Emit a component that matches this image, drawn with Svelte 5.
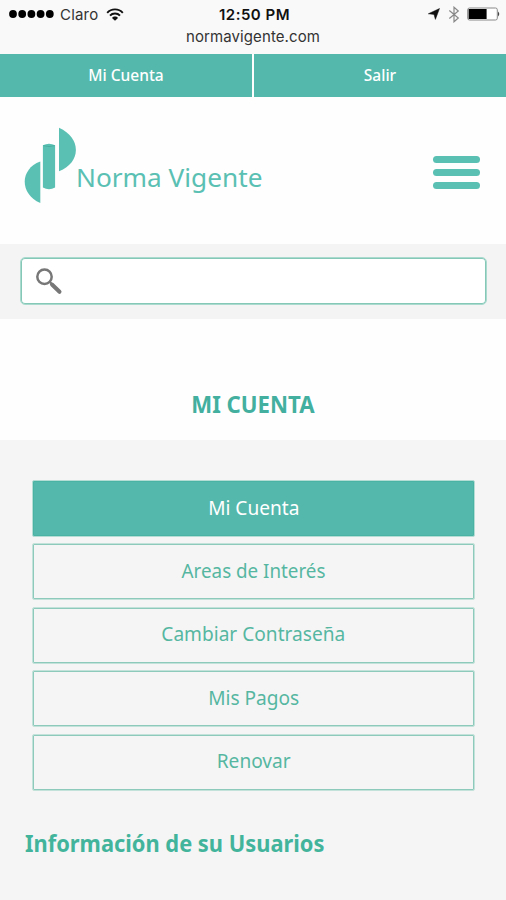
<script>
  const links = ['Mi Cuenta', 'Salir'];
  const options = [
    { label: 'Mi Cuenta', cls: 'account' },
    { label: 'Areas de Interés', cls: 'areas' },
    { label: 'Cambiar Contraseña', cls: 'password' },
    { label: 'Mis Pagos', cls: 'payments' },
    { label: 'Renovar', cls: 'renew' },
  ];
  let active = $state(0);
</script>

<div class="page">
  <div class="status">
    <div class="row">
      <div class="left">
        <svg width="46" height="8" viewBox="0 0 46 8">
          {#each [4, 13.2, 22.4, 31.6, 40.8] as cx}
            <circle {cx} cy="4" r="3.9" />
          {/each}
        </svg>
        <span class="carrier">Claro</span>
        <svg class="wifi" width="18" height="13" viewBox="0 0 18 13" fill="none" stroke="#111" stroke-width="1.9">
          <path d="M1.2 4.8C5.3.2 12.7.2 16.8 4.8" />
          <path d="M4 7.6C6.6 4.7 11.4 4.7 14 7.6" />
          <path d="M6 9.9C7.5 8.1 10.5 8.1 12 9.9L9 12.8Z" fill="#111" stroke="none" />
        </svg>
      </div>
      <span class="time">12:50 PM</span>
      <div class="right">
        <svg width="12" height="12" viewBox="0 0 12 12"><path d="M11.5.5L7.4 11.4 6 6.4.3 5.8Z" fill="#111" stroke="#111" stroke-width=".5" /></svg>
        <svg class="bt" width="12" height="17" viewBox="0 0 12 17" fill="none" stroke="#888" stroke-width="1.2"><path d="M1.3 4.5L10.3 12 6 15.8V1.2L10.3 5 1.3 12.5" /></svg>
        <svg class="battery" width="33" height="14" viewBox="0 0 33 14">
          <rect x=".7" y="1" width="29.6" height="12" rx="1.8" fill="#fff" stroke="#888" />
          <rect x="1.6" y="2" width="18" height="10" fill="#000" />
          <path d="M31 4.5Q33.500 7 31 9.500Z" fill="#444" />
        </svg>
      </div>
    </div>
    <div class="url">normavigente.com</div>
  </div>

  <nav class="topnav">
    {#each links as link}<a href="#top">{link}</a>{/each}
  </nav>

  <header>
    <div class="brand">
      <svg width="52" height="77" viewBox="0 0 52 77" fill="#5ac0b3">
        <path d="M35 .8C57.500 11 57.500 35 35 44.300Z" />
        <path d="M16.300 34.500C-4.500 42-4.500 67 16.300 76Z" />
        <path d="M18.900 18.200Q25 15.200 31.100 18.200V60.500Q25 64 18.900 60.500Z" />
        <path d="M19.300 18.600Q25 20.600 30.700 18.600" fill="none" stroke="#43a99b" stroke-width=".8" />
      </svg>
      <span class="name">Norma Vigente</span>
    </div>
    <button class="menu" aria-label="Menú"><i></i><i></i><i></i></button>
  </header>

  <div class="search">
    <label>
      <svg width="28" height="28" viewBox="0 0 28 28" fill="none" stroke="#777">
        <circle cx="9.500" cy="9.700" r="7.200" stroke-width="2.500" />
        <path d="M17 17.500L24.500 24.800" stroke-width="4" stroke-linecap="round" />
        <path d="M14.500 14.500L17 17" stroke-width="2" />
      </svg>
      <input type="text" aria-label="Buscar" />
    </label>
  </div>

  <h1><span>MI CUENTA</span></h1>

  <main>
    <div class="options">
      {#each options as option, i}
        <button class={option.cls} class:active={active === i} onclick={() => (active = i)}><span>{option.label}</span></button>
      {/each}
    </div>
    <h2><span>Información de su Usuarios</span></h2>
  </main>
</div>

<style>
  :global(body) { margin: 0; }
  .page { width: 506px; height: 900px; overflow: hidden; display: flex; flex-direction: column; background: #fefefe; font-family: "Noto Sans", sans-serif; }
  .page :global(*) { box-sizing: border-box; }
  svg { display: block; flex: none; }
  .status { height: 54px; background: #f9f9f9; font-family: Inter, "Liberation Sans", sans-serif; flex: none; color: #111; }
  .row { display: grid; grid-template-columns: 1fr auto 1fr; height: 28px; align-items: center; padding: 0 6px 0 9px; }
  .left, .right { display: flex; align-items: center; }
  .carrier { font-size: 15px; margin-left: 5px; letter-spacing: .2px; color: #333; width: 40px; white-space: nowrap; }
  .wifi { margin-left: 6px; }
  .time { font-size: 15px; font-weight: 600; letter-spacing: .5px; }
  .right { justify-content: flex-end; }
  .bt { margin: 0 7px 0 8px; }
  .url { text-align: center; font-size: 15px; line-height: 18px; letter-spacing: .1px; color: #333; }
  .topnav { height: 43px; flex: none; display: grid; grid-template-columns: 252px 252px; gap: 2px; }
  .topnav a { background: #55b8ac; color: #fff; text-decoration: none; font-size: 15.500px; text-align: center; line-height: 43px; font-weight: 500; }
  header { height: 147px; flex: none; display: flex; justify-content: space-between; padding: 30px 26px 0 24px; }
  .brand { display: flex; }
  .name { font-size: 26px; color: #5ac0b3; line-height: 36px; margin-top: 32px; transform: scaleX(1.008); transform-origin: left; }
  .menu { width: 47px; height: 33px; margin-top: 29px; padding: 0; border: 0; background: none; display: flex; flex-direction: column; justify-content: space-between; }
  .menu i { width: 47px; height: 7px; border-radius: 3.500px; background: #5ac0b3; }
  .search { height: 75px; flex: none; background: #f4f4f4; padding: 13px 19px 14px 20px; }
  label { display: flex; align-items: center; height: 48px; border: 1px solid #a9dacd; box-shadow: inset 0 0 0 1px #85c8b8; border-radius: 5px; background: #fff; padding-left: 14px; }
  input { border: 0; outline: 0; background: none; flex: 1; }
  h1 { height: 121px; flex: none; margin: 0; padding-top: 69px; text-align: center; font-size: 23px; line-height: 32px; font-weight: 700; color: #43b09f; }
  main { flex: 1; background: #f5f5f5; padding: 40px 31px 0 32px; }
  .options { display: flex; flex-direction: column; gap: 6.400px; }
  .options button { height: 57px; border: 1px solid #c3e2d9; box-shadow: inset 0 0 0 1px #8dcabb; border-radius: 2px; background: transparent; font: 20px/28px "Noto Sans", sans-serif; color: #55b7a1; padding: 0 0 2px; }
  .options button.active { background: #55b8ac; border-color: #b5ddd5; box-shadow: inset 0 0 0 1px #4bb3a3; color: #fff; }
  h2 { margin: 36px 0 0 -7px; font-size: 23px; line-height: 32px; font-weight: 700; color: #43b49c; white-space: nowrap; }
  .options span, h1 span, h2 span { display: inline-block; }
  .options span { transform: scaleX(.955); }
  .options .areas span { transform: scaleX(.94); }
  h1 span { transform: scaleX(.965); }
  h2 span { transform: scaleX(.95); transform-origin: left; }
</style>
